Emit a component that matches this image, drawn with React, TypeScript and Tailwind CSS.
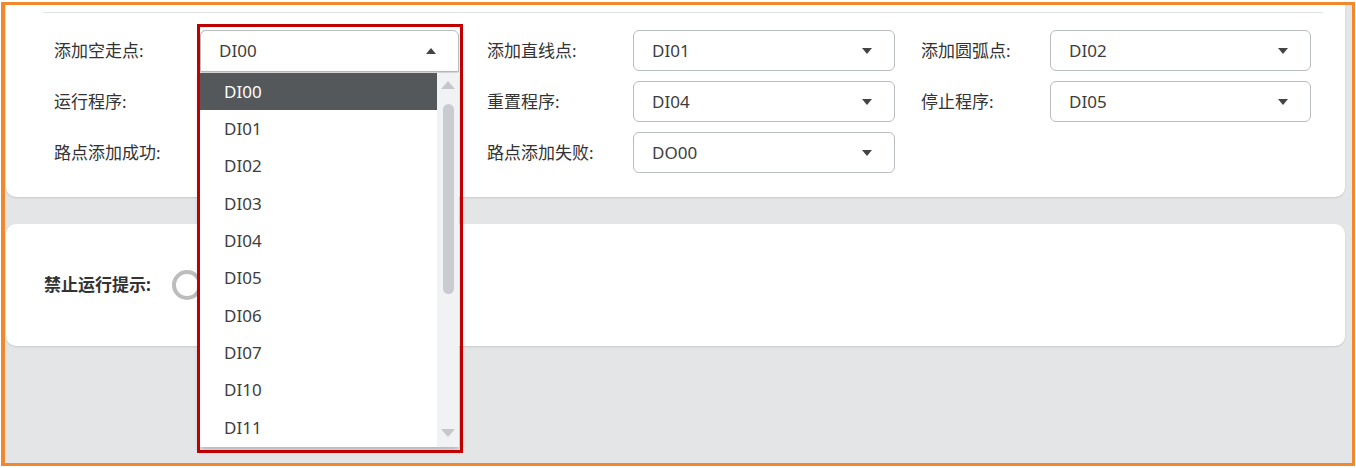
import React from "react";

const FONT = '"Noto Sans", "Noto Sans CJK SC", sans-serif';

function Caret({ up = false }: { up?: boolean }) {
  return (
    <svg width="10" height="6" viewBox="0 0 10 6" className="shrink-0">
      {up ? <path d="M0 6 L5 0 L10 6 Z" fill="#444" /> : <path d="M0 0 L5 6 L10 0 Z" fill="#444" />}
    </svg>
  );
}

function Select({ value, width }: { value: string; width: string }) {
  return (
    <div
      className={`${width} h-[41px] rounded-[6px] border border-[#b9bcc0] bg-white flex items-center justify-between pl-[18px] pr-[22px] text-[17px] text-[#3d3d3d]`}
    >
      <span>{value}</span>
      <Caret />
    </div>
  );
}

function Field({ label, value, labelW, selW }: { label: string; value?: string; labelW: string; selW: string }) {
  return (
    <div className="flex items-center">
      <div className={`${labelW} text-[17px] text-[#333]`}>{label}</div>
      {value ? <Select value={value} width={selW} /> : <div className={`${selW} h-[41px]`} />}
    </div>
  );
}

const items = ["DI00", "DI01", "DI02", "DI03", "DI04", "DI05", "DI06", "DI07", "DI10", "DI11"];

export default function App() {
  return (
    <div className="w-[1356px] h-[468px] bg-white pt-[2px] pl-[1px]" style={{ fontFamily: FONT }}>
      <div className="relative w-[1354px] h-[464px] border-[3px] border-[#f0892e] border-l-[4px] bg-[#e4e5e7] pl-[1px] pr-[7px] overflow-hidden">
        {/* card 1 */}
        <div className="bg-white rounded-b-[10px] shadow-[0_1px_2px_rgba(0,0,0,0.12)] pt-[7px] pb-[24px]">
          <div className="ml-[37px] mr-[22px] h-px bg-[#e1e2e4]" />
          <div className="mt-[17px] pl-[48px] grid grid-cols-[433px_434px_auto] gap-y-[10px]">
            <Field label="添加空走点:" value="DI00" labelW="w-[146px]" selW="w-[258px]" />
            <Field label="添加直线点:" value="DI01" labelW="w-[146px]" selW="w-[262px]" />
            <Field label="添加圆弧点:" value="DI02" labelW="w-[129px]" selW="w-[261px]" />
            <Field label="运行程序:" labelW="w-[146px]" selW="w-[258px]" />
            <Field label="重置程序:" value="DI04" labelW="w-[146px]" selW="w-[262px]" />
            <Field label="停止程序:" value="DI05" labelW="w-[129px]" selW="w-[261px]" />
            <Field label="路点添加成功:" labelW="w-[146px]" selW="w-[258px]" />
            <Field label="路点添加失败:" value="DO00" labelW="w-[146px]" selW="w-[262px]" />
          </div>
        </div>

        {/* card 2 */}
        <div className="mt-[27px] h-[122px] bg-white rounded-[10px] shadow-[0_1px_2px_rgba(0,0,0,0.12)] flex items-center pl-[38px]">
          <div className="text-[17px] font-bold text-[#333] w-[128px]">禁止运行提示:</div>
          <div className="relative w-[52px] h-[22px] rounded-full bg-[#c9cbcf]">
            <div className="absolute left-[0px] top-[-4px] w-[30px] h-[30px] rounded-full bg-white border-[4px] border-[#bdbdbd]" />
          </div>
        </div>

        {/* open select overlay */}
        <div className="absolute left-[195px] top-[25px] w-[259px] flex flex-col">
          <div className="h-[42px] rounded-t-[6px] border border-[#b9bcc0] bg-white flex items-center justify-between pl-[18px] pr-[22px] text-[17px] text-[#3d3d3d] shadow-[0_2px_3px_rgba(0,0,0,0.15)]">
            <span>DI00</span>
            <Caret up />
          </div>
          <div className="mt-[1px] h-[374px] bg-white flex shadow-[0_2px_6px_rgba(0,0,0,0.25)]">
            <div className="flex-1 flex flex-col">
              {items.map((it, i) => (
                <div
                  key={it}
                  className={`h-[37.3px] flex items-center pl-[24px] text-[17px] ${
                    i === 0 ? "bg-[#55585b] text-white" : "text-[#3d3d3d]"
                  }`}
                >
                  {it}
                </div>
              ))}
            </div>
            <div className="w-[22px] bg-[#f1f2f3] flex flex-col items-center pt-[8px] pb-[10px]">
              <svg width="14" height="8" viewBox="0 0 14 8">
                <path d="M0 8 L7 0 L14 8 Z" fill="#c4c7cc" />
              </svg>
              <div className="mt-[15px] w-[11px] h-[190px] rounded-full bg-[#c8cbd0]" />
              <div className="flex-1" />
              <svg width="14" height="8" viewBox="0 0 14 8">
                <path d="M0 0 L7 8 L14 0 Z" fill="#c4c7cc" />
              </svg>
            </div>
          </div>
        </div>

        {/* red annotation box */}
        <div className="absolute left-[192px] top-[19px] w-[266px] h-[429px] border-[3px] border-[#c00000] pointer-events-none" />
      </div>
    </div>
  );
}
